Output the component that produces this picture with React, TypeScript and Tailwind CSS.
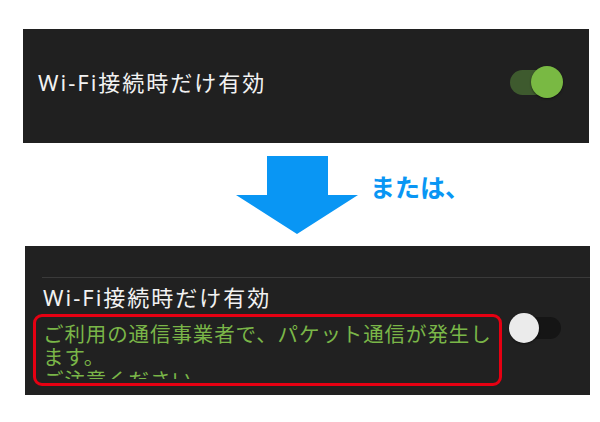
const jp = { fontFamily: '"Noto Sans", "Noto Sans CJK JP", sans-serif' };

type ToggleProps = { on: boolean };

// Android-style switch; the thumb sits over the track
function Toggle({ on }: ToggleProps) {
  if (on) {
    return (
      <div className="relative flex h-[32px] w-[53px] items-center">
        <div className="h-[25px] w-[45px] rounded-full bg-[#3e5a2e]" />
        <div className="absolute right-0 top-0 size-[32px] rounded-full bg-[#79b943] shadow-[0_1px_2px_rgba(0,0,0,0.5)]" />
      </div>
    );
  }
  return (
    <div className="relative flex h-[30px] w-[52px] items-center">
      <div className="ml-[3px] h-[22px] w-[49px] rounded-full bg-[#151515]" />
      <div className="absolute left-0 top-0 size-[30px] rounded-full bg-[#ebebeb] shadow-[0_1px_2px_rgba(0,0,0,0.5)]" />
    </div>
  );
}

function DownArrow() {
  return (
    <svg width="122" height="78" viewBox="0 0 122 78" className="block">
      <polygon points="31,0 92,0 92,39 122,39 61,78 0,39 31,39" fill="#0996f4" />
    </svg>
  );
}

export default function App() {
  return (
    <div className="h-[422px] w-[600px] overflow-hidden bg-white pt-[29px]" style={jp}>
      {/* enabled setting */}
      <div className="ml-[23px] flex h-[114px] w-[566px] items-center justify-between bg-[#202020] pb-[8px] pl-[15px] pr-[26px]">
        <span className="text-[22px] leading-[30px] tracking-[2px] text-[#f2f2f2]">Wi-Fi接続時だけ有効</span>
        <Toggle on />
      </div>

      <div className="flex h-[103px] items-start">
        <div className="ml-[236px] mt-[13px]">
          <DownArrow />
        </div>
        <span className="ml-[12px] mt-[29px] text-[25px] font-bold leading-[30px] text-[#0996f4]">
          または、
        </span>
      </div>

      {/* disabled setting with warning */}
      <div className="ml-[25px] h-[149px] w-[565px] overflow-hidden bg-[#212121] pt-[31px]">
        <div className="ml-[17px] h-px bg-[#3a3a3a]" />
        <div className="flex items-start pl-[8px]">
          <div>
            <p className="mt-[6px] pl-[10px] text-[22px] leading-[26px] tracking-[2px] text-[#f2f2f2]">
              Wi-Fi接続時だけ有効
            </p>
            <div className="mt-[4px] h-[72px] w-[469px] rounded-[9px] border-[3px] border-[#e60012] px-[7px] pt-[6px]">
              <div className="h-[56px] overflow-hidden text-[20.5px] leading-[23px] tracking-[0.9px] text-[#7ab648]">
                <p className="whitespace-nowrap">ご利用の通信事業者で、パケット通信が発生し</p>
                <p className="whitespace-nowrap">ます。</p>
                <p className="whitespace-nowrap">ご注意ください。</p>
              </div>
            </div>
          </div>
          <div className="ml-[7px] mt-[35px]">
            <Toggle on={false} />
          </div>
        </div>
      </div>
    </div>
  );
}
